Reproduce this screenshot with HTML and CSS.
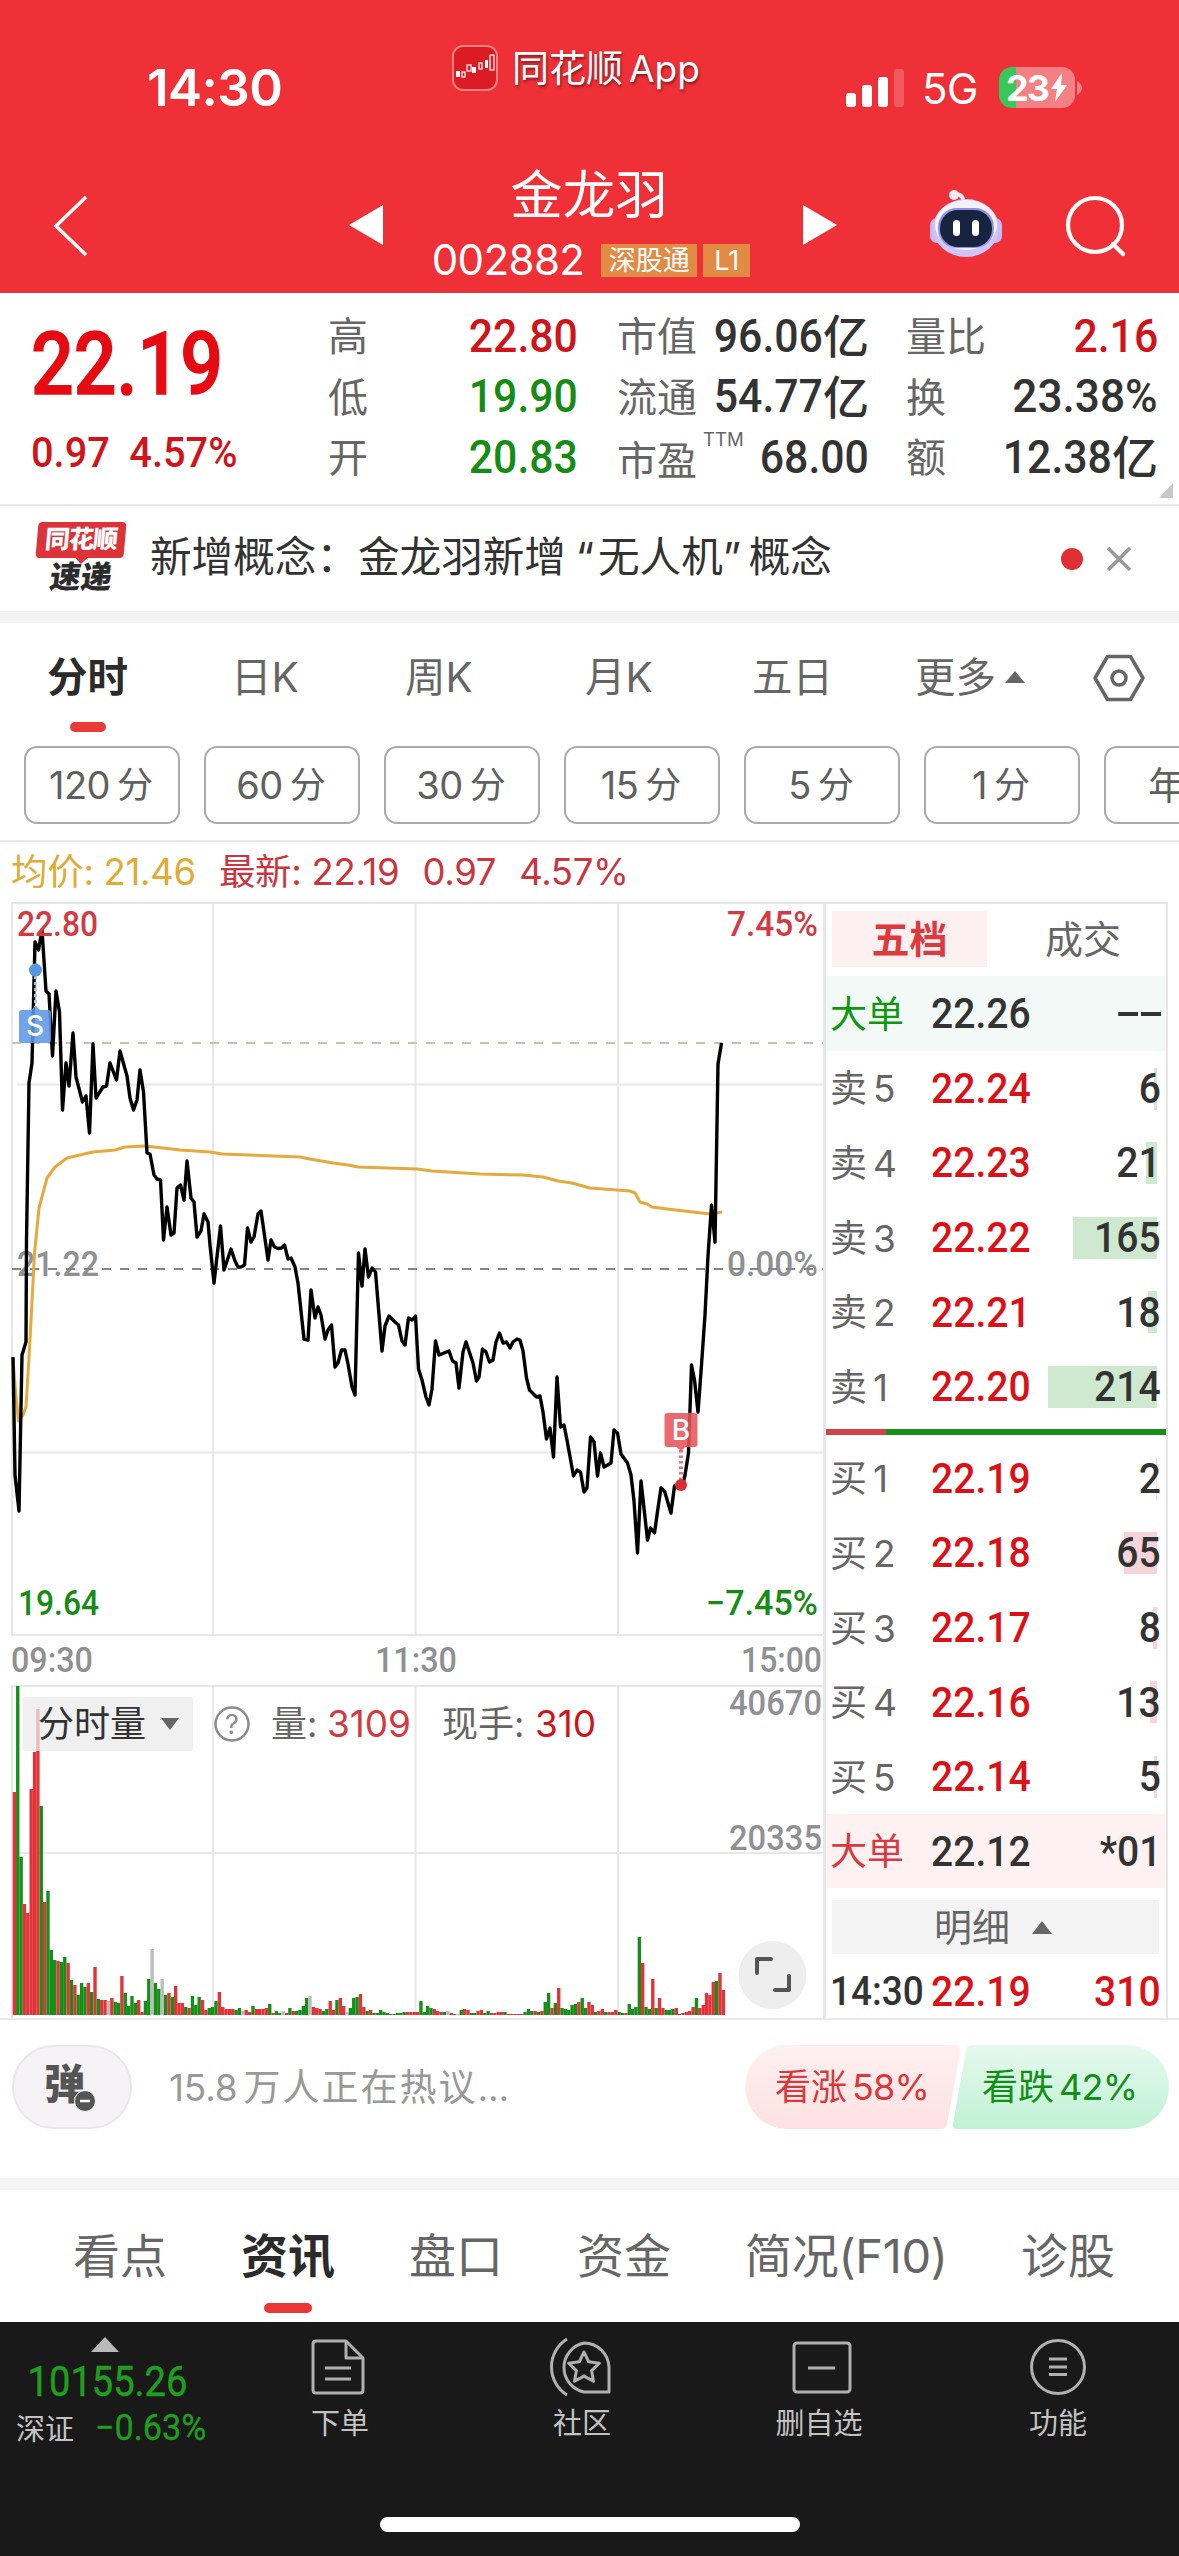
FILE: index.html
```html
<!DOCTYPE html>
<html lang="zh-CN">
<head>
<meta charset="utf-8">
<title>金龙羽 002882</title>
<link rel="stylesheet" href="styles.css">
</head>
<body>
<header class="header">
  <div class="status">
    <span class="clock">14:30</span>
    <div class="brand">
      <svg width="46" height="46" viewBox="0 0 46 46"><rect x="1" y="1" width="44" height="44" rx="10" fill="#dc1c24" stroke="#f7827f" stroke-width="2"/><g fill="#fff"><rect x="4" y="26" width="4" height="6"/><rect x="20" y="22" width="4" height="6"/><rect x="33" y="15" width="3" height="8"/></g><g fill="none" stroke="#fff" stroke-width="1.2"><rect x="10" y="27" width="3" height="5"/><rect x="15" y="20" width="4" height="6"/><rect x="27" y="18" width="3" height="6"/><rect x="38" y="10" width="4" height="15"/></g></svg>
      <span>同花顺<i>App</i></span>
    </div>
    <svg class="signal" width="58" height="40" viewBox="0 0 58 40" fill="#fff"><rect y="25" width="10" height="14" rx="3"/><rect x="16" y="17" width="10" height="22" rx="3"/><rect x="32" y="9" width="10" height="30" rx="3"/><rect x="48" y="1" width="10" height="38" rx="3" opacity=".2"/></svg>
    <span class="net">5G</span>
    <div class="battery"><b>23</b><svg width="18" height="30" viewBox="0 0 18 30"><path d="M12 0 1 16h6L5 29 17 12h-6z" fill="#fff"/></svg></div>
    <svg class="nub" width="5" height="14" viewBox="0 0 5 14"><path d="M0 0q5 3 5 7t-5 7z" fill="#f58083"/></svg>
  </div>
  <nav class="nav">
    <svg class="back" width="36" height="62" viewBox="0 0 36 62"><path d="M34 2 4 31l30 29" fill="none" stroke="#fff" stroke-width="3.500"/></svg>
    <svg class="prev" width="34" height="40" viewBox="0 0 34 40"><path d="M34 0v40L0 20z" fill="#fff"/></svg>
    <div class="stock">
      <h1>金龙羽</h1>
      <div class="code"><span>002882</span><em>深股通</em><em class="lv">L1</em></div>
    </div>
    <svg class="next" width="34" height="40" viewBox="0 0 34 40"><path d="M0 0v40l34-20z" fill="#fff"/></svg>
    <svg class="robot" width="74" height="70" viewBox="0 0 74 70">
      <path d="M34 16Q36 6 27 5" fill="none" stroke="#f2eefc" stroke-width="4"/><circle cx="25" cy="6" r="5" fill="#fbe9f3"/>
      <rect x="1" y="29" width="14" height="25" rx="7" fill="#c9b9f3"/><rect x="59" y="29" width="14" height="25" rx="7" fill="#c9b9f3"/>
      <ellipse cx="37" cy="39" rx="33" ry="29" fill="#cfc6f8"/><ellipse cx="37" cy="36" rx="31" ry="25" fill="#f3f1fe"/>
      <rect x="9" y="19" width="56" height="40" rx="19" fill="#8f93dd"/><rect x="11" y="21" width="52" height="37" rx="18" fill="#17233f"/>
      <rect x="24" y="31" width="7" height="16" rx="3.500" fill="#fff"/><rect x="43" y="31" width="7" height="16" rx="3.500" fill="#fff"/>
    </svg>
    <svg class="search" width="64" height="64" viewBox="0 0 64 64" fill="none" stroke="#fff" stroke-width="4.200"><circle cx="31" cy="31" r="27"/><path d="M49 50l10 10" stroke-linecap="round"/></svg>
  </nav>
</header>

<section class="quote">
  <div class="now"><strong>22.19</strong><div><span>0.97</span><span>4.57%</span></div></div>
  <dl class="c1"><div><dt>高</dt><dd class="up">22.80</dd></div><div><dt>低</dt><dd class="down">19.90</dd></div><div><dt>开</dt><dd class="down">20.83</dd></div></dl>
  <dl class="c2"><div><dt>市值</dt><dd>96.06</dd><u>亿</u></div><div><dt>流通</dt><dd>54.77</dd><u>亿</u></div><div><dt class="pe">市盈<sup>TTM</sup></dt><dd>68.00</dd></div></dl>
  <dl class="c3"><div><dt>量比</dt><dd class="up">2.16</dd></div><div><dt>换</dt><dd class="pct">23.38%</dd></div><div><dt>额</dt><dd>12.38</dd><u>亿</u></div></dl>
  <i class="corner"></i>
</section>

<section class="news">
  <div class="tag"><b>同花顺</b><strong>速递</strong></div>
  <p>新增概念：金龙羽新增<q>“</q>无人机<q class="r">”</q>概念</p>
  <i class="dot"></i>
  <svg width="26" height="26" viewBox="0 0 26 26"><path d="M2 2l22 22M24 2 2 24" stroke="#999" stroke-width="3.500"/></svg>
</section>

<section class="periods">
  <div class="tabs">
    <span class="on">分时</span><span>日K</span><span>周K</span><span>月K</span><span>五日</span><span class="more">更多<i></i></span>
    <svg width="52" height="48" viewBox="0 0 52 48" fill="none" stroke="#666" stroke-width="3.500"><path d="M14.500 2.500h23L50 24 37.500 45.500h-23L2 24z" stroke-linejoin="round"/><circle cx="26" cy="24" r="7"/></svg>
  </div>
  <div class="pills"><span>120<i>分</i></span><span>60<i>分</i></span><span>30<i>分</i></span><span>15<i>分</i></span><span>5<i>分</i></span><span>1<i>分</i></span><span class="year">年</span></div>
</section>

<section class="market">
  <div class="info"><span class="avg">均价: 21.46</span><span>最新: 22.19</span><span>0.97</span><span>4.57%</span></div>
  <div class="board">
    <div class="charts">
      <svg class="plot" width="816" height="1118" viewBox="10 902 816 1118">
        <g stroke="#e7e7e8" stroke-width="2" fill="none">
          <path d="M11 903H825M17 1084.500H823M12 1452.500H823M11 1635H823M11 1686H823M12 1853H823"/>
          <path d="M12 903V1635M213 903V1635M415.500 903V1635M618 903V1635M12 1686V2019M213 1686V2015M415.500 1686V2015M618 1686V2015"/>
        </g>
        <g fill="#8f9094">
          <text class="din" x="17" y="1276" textLength="82" lengthAdjust="spacingAndGlyphs">21.22</text>
          <text class="din" x="727" y="1276" textLength="91" lengthAdjust="spacingAndGlyphs">0.00%</text>
          <text class="din" x="11" y="1672" textLength="82" lengthAdjust="spacingAndGlyphs">09:30</text>
          <text class="din" x="375" y="1672" textLength="82" lengthAdjust="spacingAndGlyphs">11:30</text>
          <text class="din" x="741" y="1672" textLength="81" lengthAdjust="spacingAndGlyphs">15:00</text>
          <text class="din" x="729" y="1715" textLength="93" lengthAdjust="spacingAndGlyphs">40670</text>
          <text class="din" x="729" y="1850" textLength="93" lengthAdjust="spacingAndGlyphs">20335</text>
        </g>
        <path d="M12 1043H823" stroke="#cdbfae" stroke-width="2" stroke-dasharray="9 9"/>
        <path d="M12 1269H823" stroke="#858585" stroke-width="2" stroke-dasharray="9 9"/>
        <g id="volume"></g>
        <rect x="23" y="1697" width="170" height="54" fill="#ebebeb" fill-opacity=".75"/>
        <polyline fill="none" stroke="#e5a93d" stroke-width="3" stroke-linejoin="round" points="13,1359 16,1397 18.500,1421 23,1415 26,1407 30,1340 34.500,1253 39,1208 47,1178 55,1167 67,1158 93,1152 115,1150 125,1147 145,1146 163,1148 180,1150 210,1152 222,1154 300,1157 310,1159 333,1163 348,1165 358,1167 417,1169 432,1171 480,1174 523,1175 543,1177 558,1181 572,1183 590,1188 617,1190 630,1191 635,1193 640,1202 647,1204 652,1207 667,1209 710,1214 722,1212"/>
        <polyline fill="none" stroke="#000" stroke-width="3.400" stroke-linejoin="round" points="13,1357 15,1475 19,1511 22,1355 26,1342 26.500,1240 29,1083 32,1063 35,942 38.500,950 42,930 46,991 49,994 52.500,1056 56,991 59.500,1012 62.500,1110 66,1063 69,1086 73,1033 76,1077 82.500,1102 86,1096 89.500,1133 93,1044 96,1098 103,1087 106.500,1086 110,1063 116.500,1080 120,1051 127,1076 130,1098 133.500,1110 137,1100 140,1070 143.500,1092 147,1153 150,1154 154,1175 157,1179 160.500,1180 163.500,1240 167,1207 171,1235 174,1233 177,1188 180.500,1185 184,1200 187,1161 191,1198 194,1202 197,1237 201,1231 204,1214 208,1222 210,1245 214,1283 220.500,1226 224,1270 231,1249 235,1261 238,1267 241,1267 244.500,1265 247.500,1228 251,1242 254,1237 258,1214 261,1211 268,1260 271,1240 274.500,1247 278,1248.500 281.500,1248 284.500,1245 288,1259 291,1258 295,1267 298,1283 304,1339 308,1340 311,1290 315,1318 318,1307 321,1315 325,1339 328,1330 331.500,1325 335,1367 338,1363 341.500,1350 345,1350 348,1364 352,1387 355,1395 358.500,1253 362,1286 365,1249 368.500,1277 372,1268 375.500,1272 382,1351 385,1326 389,1316 395,1322 398.500,1325 402,1341 405,1345 408.500,1318 412,1320 415.500,1316 418.500,1369 422,1380 426,1397 429,1405 432,1389 435.500,1341 439,1355 449,1351 452.500,1361 456,1363 459,1388 463,1352 466,1342 473,1363 476.500,1381 479,1377 482.500,1349 486,1352 489.500,1362 493,1360 496,1342 499.500,1333 503,1343 506.500,1342 510,1348 513,1342 517,1339 520,1340 523,1351 526.500,1378 529.500,1390 536.500,1397 540,1396 543,1412 546.500,1439 550,1428 553.500,1457 557,1377 560.500,1427 564,1425 567,1440 573.500,1476 577,1470 580.500,1472 584,1492 587,1488 590.500,1437 594,1442 597.500,1476 600.500,1453 604,1467 611,1463 614,1430 617.500,1433 621,1454 627.500,1463 631,1475 634,1501 637.500,1553 641,1481 647.500,1540 650.500,1528 654.500,1533 658,1508 661,1488 664.500,1491 671,1513 674.500,1486 678,1487 682,1488 685,1475 688.500,1453 691.500,1365 694.500,1380 698,1412 701,1372 705,1315 708,1256 711.500,1205 715,1242 718,1064 721.500,1043"/>
        <g fill="#d33a44"><text class="din" x="17" y="936" textLength="81" lengthAdjust="spacingAndGlyphs">22.80</text><text class="din" x="727" y="936" textLength="91" lengthAdjust="spacingAndGlyphs">7.45%</text></g>
        <g fill="#168c16"><text class="din" x="18" y="1615" textLength="81" lengthAdjust="spacingAndGlyphs">19.64</text><text class="din" x="706" y="1615" textLength="112" lengthAdjust="spacingAndGlyphs">−7.45%</text></g>
        <path d="M35.500 976V1008" stroke="#a9c4ee" stroke-width="3" stroke-dasharray="3 3"/>
        <circle cx="35.500" cy="970" r="6.500" fill="#5795e0"/>
        <path d="M19 1013q0-3 3-3h9l4.500-4 4.500 4h8q3 0 3 3v27q0 3-3 3H22q-3 0-3-3z" fill="#5d98e8" fill-opacity=".88"/>
        <text class="mark" x="35" y="1036">S</text>
        <path d="M681 1450V1482" stroke="#e0757e" stroke-width="4" stroke-dasharray="2.500 3"/>
        <circle cx="681" cy="1485" r="6" fill="#dc2c32"/>
        <path d="M664.500 1416q0-3 3-3h27q3 0 3 3v28q0 3-3 3h-9l-4.500 4-4.500-4h-9q-3 0-3-3z" fill="#e6565c" fill-opacity=".88"/>
        <text class="mark" x="681" y="1440">B</text>
        <g class="vol">
          <text x="38" y="1737" fill="#333">分时量</text><path d="M161 1718h18l-9 12z" fill="#666"/>
          <circle cx="232" cy="1724" r="16.500" fill="none" stroke="#8c8c8c" stroke-width="2.500"/><text x="232" y="1733.500" class="qm">?</text>
          <text x="271" y="1737" fill="#666">量:</text><text x="327" y="1737" class="num" fill="#d33a44" textLength="84">3109</text>
          <text x="442" y="1737" fill="#666">现手:</text><text x="535" y="1737" class="num" fill="#d0141c" textLength="61">310</text>
        </g>
        <circle cx="772.500" cy="1975" r="34" fill="#eee"/>
        <path d="M757 1973V1959H771M789 1976V1990H775" fill="none" stroke="#555" stroke-width="4" stroke-linecap="round" stroke-linejoin="round"/>
      </svg>
    </div>
    <div class="book">
      <div class="switch"><b>五档</b><span>成交</span></div>
      <div class="row big sell"><label>大单</label><span>22.26</span><em class="dash"></em></div>
      <div class="row"><label>卖<i>5</i></label><span>22.24</span><em>6</em><s style="width:3px"></s></div>
      <div class="row"><label>卖<i>4</i></label><span>22.23</span><em>21</em><s style="width:11px"></s></div>
      <div class="row"><label>卖<i>3</i></label><span>22.22</span><em>165</em><s style="width:84px"></s></div>
      <div class="row"><label>卖<i>2</i></label><span>22.21</span><em>18</em><s style="width:9px"></s></div>
      <div class="row"><label>卖<i>1</i></label><span>22.20</span><em>214</em><s style="width:109px"></s></div>
      <div class="ratio"></div>
      <div class="row buy"><label>买<i>1</i></label><span>22.19</span><em>2</em><s style="width:1px"></s></div>
      <div class="row buy"><label>买<i>2</i></label><span>22.18</span><em>65</em><s style="width:33px"></s></div>
      <div class="row buy"><label>买<i>3</i></label><span>22.17</span><em>8</em><s style="width:4px"></s></div>
      <div class="row buy"><label>买<i>4</i></label><span>22.16</span><em>13</em><s style="width:7px"></s></div>
      <div class="row buy"><label>买<i>5</i></label><span>22.14</span><em>5</em><s style="width:3px"></s></div>
      <div class="row big bid"><label>大单</label><span>22.12</span><em>*01</em></div>
      <div class="detail">明细<i></i></div>
      <div class="row last"><time>14:30</time><span>22.19</span><em>310</em></div>
    </div>
  </div>
</section>

<section class="talk">
  <div class="danmu"><b>弹</b><svg width="22" height="22" viewBox="0 0 22 22"><circle cx="11" cy="11" r="10.500" fill="#555" stroke="#f5f3f5"/><path d="M6 11h10" stroke="#fff" stroke-width="2.500"/></svg></div>
  <p>15.8<i>万人正在热议</i>...</p>
  <div class="vote">
    <svg width="424" height="84" viewBox="0 0 424 84">
      <defs><linearGradient id="bull" x2="0" y2="1"><stop stop-color="#fff0f0"/><stop offset="1" stop-color="#fde2e1"/></linearGradient><linearGradient id="bear" x2="0" y2="1"><stop stop-color="#e6f9ee"/><stop offset="1" stop-color="#c0f2d4"/></linearGradient></defs>
      <path d="M42 0H211q5 0 4.500 5L202 79q-1 5-6 5H42A42 42 0 0 1 42 0z" fill="url(#bull)"/>
      <path d="M227 0H382A42 42 0 0 1 382 84H212q-5 0-4-5L221 5q1-5 6-5z" fill="url(#bear)"/>
    </svg>
    <span class="bull">看涨<i>58%</i></span><span class="bear">看跌<i>42%</i></span>
  </div>
</section>

<nav class="sections"><span>看点</span><span class="on">资讯</span><span>盘口</span><span>资金</span><span class="f10">简况(F10)</span><span>诊股</span></nav>

<footer class="dock">
  <div class="index"><i></i><strong>10155.26</strong><div><span>深证</span><b>−0.63%</b></div></div>
  <div class="item i1"><svg width="60" height="60" viewBox="0 0 60 60"><path d="M8 4H38L55 21V53q0 3-3 3H8q-3 0-3-3V7q0-3 3-3zM38 4V21H55M17 31H43M17 42H43"/></svg><span>下单</span></div>
  <div class="item i2"><svg width="64" height="60" viewBox="0 0 64 60"><path d="M19 2A33 33 0 0 0 19 58M36 6A25 25 0 0 0 36 55H61V30A25 25 0 0 0 36 6z"/><path d="M36 15l4.700 9.800 10.700 1.400-7.800 7.400 1.900 10.700-9.500-5.200-9.500 5.200 1.900-10.700-7.800-7.400 10.700-1.400z"/></svg><span>社区</span></div>
  <div class="item i3"><svg width="60" height="60" viewBox="0 0 60 60"><rect x="2" y="6" width="56" height="49" rx="3"/><path d="M16 31H43"/></svg><span>删自选</span></div>
  <div class="item i4"><svg width="60" height="60" viewBox="0 0 60 60"><circle cx="30" cy="30" r="26.500"/><path d="M21 22H39M21 30H39M21 37.500H39"/></svg><span>功能</span></div>
  <div class="home"></div>
</footer>
<script src="volume.js"></script>
</body>
</html>
```
FILE: styles.css
```css
* { box-sizing: border-box; }
body { margin: 0; width: 1179px; height: 2556px; overflow: hidden; background: #fff; color: #333; font-family: Inter, "Noto Sans CJK SC", sans-serif; line-height: 1; display: flex; flex-direction: column; }
i, em, u, s { font-style: normal; text-decoration: none; }
h1, p, dl, dd { margin: 0; font-weight: 400; }
svg { display: block; flex: none; }
section, header, nav, footer { flex: none; }

.header { height: 293px; background: #ef3037; color: #fff; border-bottom: 2px solid #d93a3f; }
.status { height: 150px; display: flex; align-items: flex-start; white-space: nowrap; }
.clock { width: 452px; padding: 62px 0 0 147px; font-size: 51px; font-weight: 600; letter-spacing: -.5px; }
.brand { width: 394px; display: flex; gap: 14px; padding-top: 45px; font-size: 37px; line-height: 48px; text-shadow: 1px 2px 3px #0007; }
.brand i { margin-left: 6px; }
.signal { margin-top: 68px; width: 58px; }
.net { width: 77px; margin-left: 18px; padding-top: 68px; font-size: 42px; letter-spacing: -.5px; }
.battery { margin-top: 67px; width: 76px; height: 41px; border-radius: 13px; background: linear-gradient(90deg, #38c85a 17px, #f58083 17px); display: flex; align-items: center; justify-content: center; gap: 2px; }
.battery b { font-size: 36px; font-weight: 700; letter-spacing: -2px; }
.nub { margin: 81px 0 0 2px; }
.nav { height: 141px; display: flex; align-items: flex-start; }
.back { margin: 45px 0 0 52px; }
.prev { margin: 55px 0 0 261px; }
.stock { width: 420px; padding-top: 15px; display: flex; flex-direction: column; align-items: center; }
.stock h1 { font-size: 52.500px; line-height: 60px; position: relative; left: -4px; }
.code { display: flex; align-items: center; gap: 6px; margin: 18px 4px 0 0; height: 34px; }
.code span { font-size: 42px; letter-spacing: -.6px; margin-right: 11px; }
.code em { height: 33px; width: 96px; background: #e18b45; font-size: 27px; line-height: 33px; text-align: center; }
.code .lv { width: 47px; }
.next { margin-top: 55px; }
.robot { margin: 39px 0 0 92px; }
.search { margin: 44px 0 0 61px; }

.quote { position: relative; height: 213px; border-bottom: 2px solid #e9e9e9; display: flex; font-size: 40px; }
.now strong, .now span, .quote dd { font-family: Roboto, sans-serif; font-weight: 500; }
.now { width: 328px; padding: 27px 0 0 31px; color: #e60b12; }
.now strong { display: block; font-size: 87px; line-height: 88px; transform: scaleX(.865); transform-origin: left; -webkit-text-stroke: 1.5px; }
.now div { display: flex; gap: 17px; margin-top: 22px; transform: scaleX(.925); transform-origin: left; width: 250px; color: #cf151b; }
.now span { font-size: 43px; line-height: 44px; margin-right: 4px; }
.quote dl { padding-top: 14px; }
.quote dl > div { height: 60.500px; display: flex; align-items: center; white-space: nowrap; }
.quote dt { color: #666; flex: 1; }
.quote dd { font-size: 47px; transform: scaleX(.91); transform-origin: right; position: relative; top: -2px; }
.quote .pct { transform: scaleX(.94); }
.quote u { font-size: 46px; font-weight: 500; position: relative; top: -1px; }
.quote .up { color: #cf151b; }
.quote .down { color: #168c16; }
.c1 { width: 250px; }
.c2 { width: 252px; margin-left: 39px; }
.c3 { width: 252px; margin-left: 37px; }
.quote .pe { position: relative; top: 3px; }
.quote sup { position: absolute; left: 86px; top: -12px; font-size: 18.500px; line-height: 20px; }
.corner { position: absolute; right: 6px; bottom: 6px; border-left: 14px solid transparent; border-bottom: 15px solid #c8c8c8; }

.news { height: 117px; border-bottom: 12px solid #f3f3f3; display: flex; align-items: center; }
.tag { width: 88px; margin-left: 37px; text-align: center; position: relative; top: 0; }
.tag b { display: block; height: 36px; font-size: 25px; line-height: 34px; font-weight: 900; letter-spacing: -1px; color: #fff; background: #dc3338; transform: skewX(-5deg); border-radius: 4px; }
.tag b::after { content: ""; position: absolute; left: 40px; bottom: -6px; border: 6px solid transparent; border-bottom: 0; border-top-color: #dc3338; }
.tag strong { display: block; font-size: 31px; line-height: 37px; font-weight: 900; transform: skewX(-8deg); color: #2c2c2c; }
.news p { width: 908px; margin-left: 25px; padding-bottom: 1px; font-size: 41.600px; white-space: nowrap; }
.news q { quotes: none; display: inline-block; width: 32px; text-align: right; padding-right: 4px; font-family: Inter; }
.news q::before, .news q::after { content: none; }
.news .r { text-align: left; width: 26px; padding: 0; }
.news .dot { width: 22px; height: 22px; border-radius: 50%; background: #e03034; margin: 0 23px 0 3px; }

.periods { height: 219px; border-bottom: 2px solid #e9e9e9; overflow: hidden; }
.tabs { height: 123px; display: grid; grid-template-columns: 47px 184px 174px 180px 167px 163px 178px 52px; font-size: 40.500px; color: #666; padding-top: 35px; line-height: 40px; white-space: nowrap; }
.tabs .on { grid-column: 2; color: #2b2b2b; font-weight: 700; }
.tabs .on::after { content: ""; display: block; width: 36px; height: 10px; border-radius: 5px; margin: 24px 0 0 23px; background: #e93a38; }
.tabs svg { margin-top: -4px; }
.more i { display: inline-block; border: 10px solid transparent; border-top: 0; border-bottom: 12px solid #666; margin: 0 0 9px 9px; }
.pills { display: flex; gap: 24px; padding-left: 24px; }
.pills span { flex: none; width: 156px; height: 78px; border: 2px solid #aaa; border-radius: 13px; display: flex; align-items: center; justify-content: center; gap: 7px; font-size: 38px; letter-spacing: -.5px; color: #606060; padding-right: 2px; }
.pills i { font-size: 36px; letter-spacing: 0; }
.pills .year { justify-content: flex-start; padding-left: 42px; }

.info { height: 60px; padding: 11px 0 0 11px; display: flex; gap: 23px; font-size: 36.500px; line-height: 38px; letter-spacing: -.3px; color: #cb3540; white-space: nowrap; }
.info .avg { color: #e0ac35; }
.board { display: flex; height: 1118px; padding-left: 10px; border-bottom: 2px solid #e9e9e9; }
.charts { width: 816px; border-right: 3px solid #e7e7e8; }
.din { font: 500 35px Roboto, sans-serif; }
.mark { font: 500 28px Inter, sans-serif; fill: #fff; text-anchor: middle; }
.vol { font-size: 36px; }
.vol .num { font-size: 37px; }
.vol .qm { font-size: 27px; fill: #8c8c8c; text-anchor: middle; }

.book { width: 342px; border: 2px solid #e7e7e8; border-left: 0; border-bottom: 0; }
.switch { height: 72px; display: flex; font-size: 38px; line-height: 56px; text-align: center; padding: 7px 0 0 6px; }
.switch b { width: 155px; height: 56px; background: #fdf0f1; color: #dd3a3e; font-weight: 700; }
.switch span { width: 192px; margin-right: -13px; color: #666; }
.row { position: relative; display: flex; align-items: center; height: 74.600px; padding: 2px 5px 0 4px; font: 500 42px/1 Roboto, sans-serif; color: #dc1118; }
.row label { width: 101px; font: 400 37px/1 Inter, "Noto Sans CJK SC", sans-serif; color: #666; }
.row label i { margin-left: 6px; }
.row span { flex: 1; transform: scaleX(.93); transform-origin: left; }
.row em { transform: scaleX(.93); transform-origin: right; color: #333; z-index: 1; }
.row s { position: absolute; right: 9px; top: 17px; height: 42px; background: #cfe9d0; }
.row.buy s { background: #f6d4d9; }
.row.big span { color: #333; }
.row.sell { background: #f2f9f7; }
.row.sell label { color: #0f980f; }
.row.bid { background: #fdf2f1; }
.row.bid label { color: #d83a43; }
.row .dash { width: 46px; height: 4px; background: linear-gradient(90deg, #333 21px, transparent 21px 25px, #333 25px); }
.row time { width: 101px; color: #333; font-size: 41px; transform: scaleX(.9); transform-origin: left; }
.row.last { height: 72px; padding-top: 3px; }
.row.last em { color: #dc1118; }
.ratio { height: 6px; margin: 5px 0 6px; background: linear-gradient(90deg, #d04448 60px, #188f18 60px); }
.detail { height: 54px; margin: 12px 7px 0 6px; background: #f3f3f3; display: flex; align-items: center; justify-content: center; gap: 22px; padding-right: 5px; font-size: 38px; color: #666; }
.detail i { border: 10px solid transparent; border-top: 0; border-bottom: 13px solid #666; }

.talk { height: 170px; border-bottom: 12px solid #f4f4f4; display: flex; padding: 25px 0 0 12px; color: #999; }
.danmu { position: relative; width: 120px; height: 84px; border: 2px solid #ebe8eb; border-radius: 42px; background: #f5f3f5; color: #555; font-size: 41px; line-height: 74px; padding-left: 30px; }
.danmu b { font-weight: 900; }
.danmu svg { position: absolute; left: 60px; top: 43px; }
.talk p { width: 576px; margin-left: 37px; font-size: 37px; line-height: 86px; letter-spacing: -.2px; white-space: nowrap; }
.talk p i { letter-spacing: 2px; margin-left: 6px; }
.vote { position: relative; width: 424px; height: 84px; }
.vote span { position: absolute; left: 30px; top: 24px; font-size: 36px; line-height: 37px; white-space: nowrap; color: #d9393d; }
.vote i { letter-spacing: -.8px; margin-left: 5px; }
.vote .bear { left: 237px; color: #128f16; }

.sections { height: 132px; display: grid; grid-template-columns: 168px 168px 168px 168px 276px 160px; padding: 43px 0 0 73px; font-size: 47px; line-height: 46px; color: #666; white-space: nowrap; }
.sections .on { color: #2b2b2b; font-weight: 700; }
.sections .on::after { content: ""; display: block; width: 48px; height: 10px; border-radius: 5px; margin: 24px 0 0 23px; background: #ea3735; }
.sections .f10 { letter-spacing: -.3px; }

.dock { position: relative; height: 234px; background: #191919; color: #c2c2c2; font-size: 29px; }
.dock { display: grid; grid-template-columns: 218px 246px 246px 216px 1fr; padding-top: 15px; }
.index { text-align: center; color: #1f9e1f; }
.index i { display: block; width: 0; margin-left: 91px; border: 14px solid transparent; border-top: 0; border-bottom: 15px solid #b9b9b9; }
.index strong { display: block; margin: 7px 0 0 -3px; font: 400 43px/44px Roboto, sans-serif; transform: scaleX(.885); -webkit-text-stroke: .5px; }
.index div { display: flex; align-items: center; padding-left: 16px; margin-top: 9px; height: 34px; }
.index span { color: #c2c2c2; }
.index b { font: 400 36px/36px Roboto, sans-serif; transform: scaleX(.95); transform-origin: left; margin: -3px 0 0 21px; -webkit-text-stroke: .3px; }
.item svg { fill: none; stroke: #b0b0b0; stroke-width: 3; stroke-linejoin: round; }
.item { display: flex; flex-direction: column; align-items: center; gap: 12px; width: 90px; }
.i1 { margin-left: 77px; }
.i1 svg { margin-left: -5px; }
.i2 { margin-left: 73px; }
.i2 svg { margin-left: -4px; }
.i3 { margin-left: 64px; }
.i3 svg { margin-left: 6px; }
.i4 { margin-left: 87px; }
.home { position: absolute; left: 380px; top: 195px; width: 420px; height: 15px; border-radius: 8px; background: #fff; }
```
FILE: volume.js
```js
// Per-minute volume: letter = bar colour, number = bar height
const bars = `
r223 g329 g158 r111 r102 r226 r263 r306 g209 r113
g124 g65 g55 r54 g53 g58 r52 g35 r30 g20
g32 g28 r32 g23 r48 g16 r15 r15 x14 r17
g13 g12 r39 g22 g9 g19 g12 r15 r3 g14
g36 x66 g32 g26 x36 g20 r22 g18 r29 r12
r12 g8 r7 g19 g10 g18 r15 r5 g7 g8
g14 r23 r8 r6 r6 r6 g5 g7 x4 r5
r3 g9 r6 r6 r6 r7 g11 r2 g4 g2
x4 r2 g7 r4 g4 g5 g9 g17 x19 r8
r7 r6 g4 g6 r14 r5 g15 r17 r9 x3
g7 g17 g18 r21 r8 g4 r5 g2 g2 g5
g3 g2 r1 g1 g2 g2 g3 r3 r3 r3
r3 g14 g3 g9 g7 r6 r4 r3 g3 x4
r2 r1 x1 g5 r6 r5 g2 g2 r4 r5
g2 g4 r2 r2 r3 r3 g3 r1 r1 r1
r1 r1 g3 g6 g4 r4 g3 r4 g13 g22
r7 g12 r27 g7 g6 g5 g10 g11 r13 g17
g7 r13 r10 g3 r4 r6 g3 r3 r3 r5
g3 g2 r2 g11 g6 g8 g78 r52 g8 g6
r36 g7 r17 r7 g5 g5 g6 r7 g1 r2
r3 r4 r8 g17 r7 r10 r22 r20 r33 g34
r42 r25`.trim().split(/\s+/);
const colors = { r: '#e23438', g: '#158f17', x: '#bcbcbc' };
document.getElementById('volume').innerHTML = bars.map((b, i) => {
  const h = +b.slice(1);
  return `<rect x="${(12.7 + 3.36 * i).toFixed(2)}" y="${2015 - h}" width="3.36" height="${h}" fill="${colors[b[0]]}"/>`;
}).join('');
```
